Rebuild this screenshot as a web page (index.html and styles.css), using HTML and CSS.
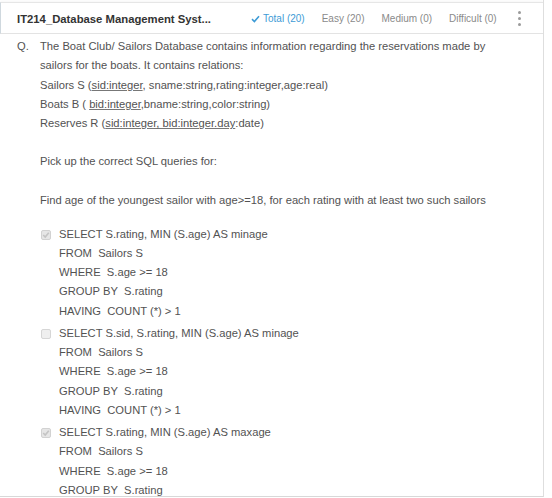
FILE: index.html
```html
<!DOCTYPE html>
<html>
<head>
<meta charset="utf-8">
<link rel="stylesheet" href="styles.css">
</head>
<body>
<div class="panel">
  <div class="header">
    <div class="title">IT214_Database Management Syst...</div>
    <div class="tabs">
      <span class="tab active"><svg class="tick" width="9" height="8" viewBox="0 0 9 8"><path d="M1 4.2 L3.4 6.5 L8 1.2" fill="none" stroke="#3d9bd6" stroke-width="1.6"/></svg>Total (20)</span>
      <span class="tab">Easy (20)</span>
      <span class="tab">Medium (0)</span>
      <span class="tab">Difficult (0)</span>
    </div>
    <div class="kebab"><i></i><i></i><i></i></div>
  </div>
  <div class="content">
    <div class="qlabel">Q.</div>
    <div class="qbody">
      <p class="line">The Boat Club/ Sailors Database contains information regarding the reservations made by</p>
      <p class="line">sailors for the boats. It contains relations:</p>
      <p class="line">Sailors S (<span class="u">sid:integer</span>, sname:string,rating:integer,age:real)</p>
      <p class="line">Boats B ( <span class="u">bid:integer</span>,bname:string,color:string)</p>
      <p class="line">Reserves R (<span class="u">sid:integer, bid:integer.day</span>:date)</p>
      <p class="line gap">Pick up the correct SQL queries for:</p>
      <p class="line gap">Find age of the youngest sailor with age&gt;=18, for each rating with at least two such sailors</p>
      <div class="options">
        <div class="option">
          <span class="cb checked"><svg width="8" height="8" viewBox="0 0 8 8"><path d="M1.2 4 L3.2 6 L6.8 1.8" fill="none" stroke="#c4c4c4" stroke-width="1.6"/></svg></span>
          <div class="sql">
            <p class="line">SELECT S.rating, MIN (S.age) AS minage</p>
            <p class="line">FROM&nbsp; Sailors S</p>
            <p class="line">WHERE&nbsp; S.age &gt;= 18</p>
            <p class="line">GROUP BY&nbsp; S.rating</p>
            <p class="line">HAVING&nbsp; COUNT (*) &gt; 1</p>
          </div>
        </div>
        <div class="option">
          <span class="cb"></span>
          <div class="sql">
            <p class="line">SELECT S.sid, S.rating, MIN (S.age) AS minage</p>
            <p class="line">FROM&nbsp; Sailors S</p>
            <p class="line">WHERE&nbsp; S.age &gt;= 18</p>
            <p class="line">GROUP BY&nbsp; S.rating</p>
            <p class="line">HAVING&nbsp; COUNT (*) &gt; 1</p>
          </div>
        </div>
        <div class="option">
          <span class="cb checked"><svg width="8" height="8" viewBox="0 0 8 8"><path d="M1.2 4 L3.2 6 L6.8 1.8" fill="none" stroke="#c4c4c4" stroke-width="1.6"/></svg></span>
          <div class="sql">
            <p class="line">SELECT S.rating, MIN (S.age) AS maxage</p>
            <p class="line">FROM&nbsp; Sailors S</p>
            <p class="line">WHERE&nbsp; S.age &gt;= 18</p>
            <p class="line">GROUP BY&nbsp; S.rating</p>
          </div>
        </div>
      </div>
    </div>
  </div>
</div>
</body>
</html>
```
FILE: styles.css
```css
* { box-sizing: border-box; }
html, body { margin: 0; padding: 0; background: #fff; }
body {
  font-family: "Liberation Sans", Arial, sans-serif;
  width: 552px;
  height: 498px;
  overflow: hidden;
}
.panel {
  width: 544px;
  height: 497px;
  padding-top: 2px;
  border-right: 1px solid #dedede;
  border-bottom: 1px solid #d8d8d8;
  overflow: hidden;
}
.header {
  height: 32px;
  display: flex;
  align-items: center;
  border-top: 1px solid #e6e6e6;
  border-bottom: 1px solid #e3e3e3;
  border-left: 1px solid #cfd8de;
  padding-left: 16px;
  box-shadow: 0 -1px 2px rgba(0,0,0,0.04);
}
.title {
  font-size: 11.3px;
  font-weight: bold;
  color: #333;
  width: 234px;
  padding-top: 1px;
}
.tabs {
  display: flex;
  gap: 17px;
  font-size: 10px;
  color: #8a8a8a;
  padding-top: 1px;
}
.tab { display: flex; align-items: center; }
.tab.active { color: #3d9bd6; }
.tick { margin-right: 3px; }
.kebab {
  margin-left: 21px;
  display: flex;
  flex-direction: column;
  gap: 2.5px;
  padding-top: 1px;
}
.kebab i {
  display: block;
  width: 3.5px;
  height: 3.5px;
  border-radius: 50%;
  background: #9a9a9a;
}
.content {
  display: flex;
  padding: 3px 0 0 17px;
  font-size: 11.2px;
  color: #525252;
}
.qlabel { width: 23px; line-height: 19.3px; }
.qbody { flex: 1; }
.line { margin: 0; line-height: 19.3px; height: 19.3px; white-space: nowrap; }
.line.gap { margin-top: 19px; }
.u { text-decoration: underline; text-decoration-color: #777; text-underline-offset: 1px; }
.options { margin-top: 14.5px; display: flex; flex-direction: column; gap: 2.8px; }
.option { display: flex; align-items: flex-start; }
.cb {
  width: 10px;
  height: 10px;
  margin: 5px 8px 0 1px;
  border: 1px solid #d6d6d6;
  border-radius: 2px;
  background: #efefef;
  display: flex;
  align-items: center;
  justify-content: center;
  flex: none;
}
.cb.checked { background: #e6e6e6; border-color: #d2d2d2; }
.sql { flex: 1; }
```
